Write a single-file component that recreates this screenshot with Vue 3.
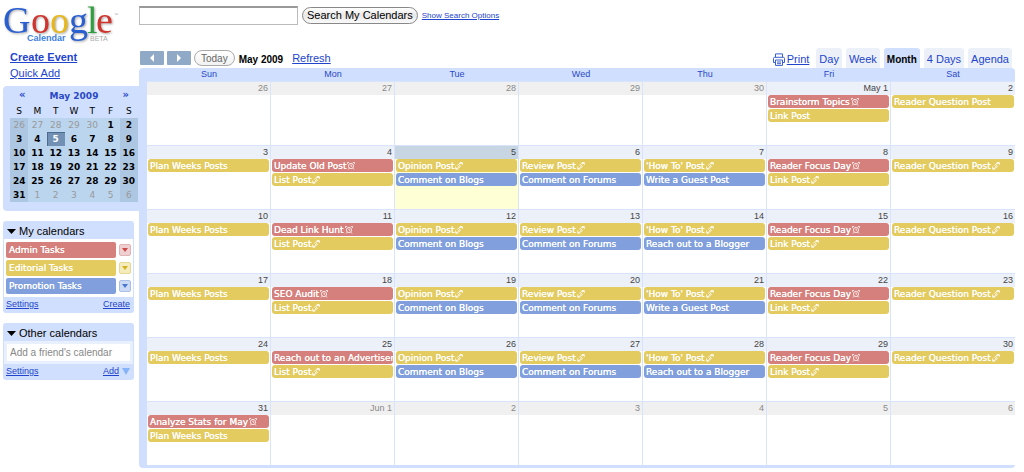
<script setup>
import { ref } from 'vue';

const search = ref('');
const friend = ref('');
const view = ref('Month');

const views = ['Day', 'Week', 'Month', '4 Days', 'Agenda'];
const weekdays = ['Sun', 'Mon', 'Tue', 'Wed', 'Thu', 'Fri', 'Sat'];

const calendars = [
    { name: 'Admin Tasks', color: 'red' },
    { name: 'Editorial Tasks', color: 'yellow' },
    { name: 'Promotion Tasks', color: 'blue' },
];

const red = (title, icon = 'alarm') => ({ title, icon, color: 'red' });
const yellow = (title, icon = 'repeat') => ({ title, icon, color: 'yellow' });
const blue = (title) => ({ title, icon: '', color: 'blue' });

function workWeek(mondayTask, thursdayTask) {
    return [
        [yellow('Plan Weeks Posts', '')],
        [mondayTask, yellow('List Post')],
        [yellow('Opinion Post'), blue('Comment on Blogs')],
        [yellow('Review Post'), blue('Comment on Forums')],
        [yellow("'How To' Post"), blue(thursdayTask)],
        [red('Reader Focus Day'), yellow('Link Post')],
        [yellow('Reader Question Post')],
    ];
}

const events = [
    [[], [], [], [], [], [red('Brainstorm Topics'), yellow('Link Post', '')], [yellow('Reader Question Post', '')]],
    workWeek(red('Update Old Post'), 'Write a Guest Post'),
    workWeek(red('Dead Link Hunt'), 'Reach out to a Blogger'),
    workWeek(red('SEO Audit'), 'Write a Guest Post'),
    workWeek(red('Reach out to an Advertiser'), 'Reach out to a Blogger'),
    [[red('Analyze Stats for May'), yellow('Plan Weeks Posts', '')], [], [], [], [], [], []],
];

// May 2009 starts on a Friday, April has 30 days
const weeks = events.map((week, w) => week.map((items, d) => {
    const n = w * 7 + d - 4;
    const day = n < 1 ? n + 30 : n > 31 ? n - 31 : n;
    let label = String(day);
    if (n === 1) label = 'May 1';
    if (n === 32) label = 'Jun 1';
    return { day, label, items, other: n < 1 || n > 31, today: n === 5 };
}));
</script>

<template>
    <div class="page">
        <aside class="sidebar">
            <svg class="logo" width="118" height="44" viewBox="0 0 118 44" role="img" aria-label="Google Calendar beta">
                <g class="google">
                    <text x="-1" y="33" fill="#2a5fd0">G</text>
                    <text x="27" y="33" fill="#d0342c">o</text>
                    <text x="46" y="33" fill="#e8b71a">o</text>
                    <text x="65" y="33" fill="#2a5fd0">g</text>
                    <text x="83" y="33" fill="#2f9e3f">l</text>
                    <text x="92" y="33" fill="#d0342c">e</text>
                </g>
                <text x="23" y="41" class="product">Calendar</text>
                <text x="86" y="41" class="beta">BETA</text>
                <text x="110" y="16" class="tm">™</text>
            </svg>
            <nav class="actions">
                <a href="#" class="create">Create Event</a>
                <a href="#">Quick Add</a>
            </nav>

            <section class="mini">
                <div class="mini-head">
                    <button type="button" aria-label="Previous month">«</button>
                    <span>May 2009</span>
                    <button type="button" aria-label="Next month">»</button>
                </div>
                <table>
                    <thead>
                        <tr><th v-for="d in weekdays" :key="d">{{ d[0] }}</th></tr>
                    </thead>
                    <tbody>
                        <tr v-for="(week, w) in weeks" :key="w">
                            <td v-for="cell in week" :key="cell.day" :class="{ other: cell.other, today: cell.today }">{{ cell.day }}</td>
                        </tr>
                    </tbody>
                </table>
            </section>

            <section class="panel">
                <h2><svg width="9" height="5" viewBox="0 0 9 5"><path d="M0 0h9L4.5 5z" /></svg>My calendars</h2>
                <ul>
                    <li v-for="c in calendars" :key="c.name">
                        <a href="#" class="name" :class="c.color">{{ c.name }}</a>
                        <button type="button" class="drop" :class="c.color" :aria-label="c.name + ' options'">
                            <svg width="6" height="4" viewBox="0 0 6 4"><path d="M0 0h6L3 4z" fill="currentColor" /></svg>
                        </button>
                    </li>
                </ul>
                <div class="panel-foot">
                    <a href="#">Settings</a>
                    <a href="#">Create</a>
                </div>
            </section>

            <section class="panel">
                <h2><svg width="9" height="5" viewBox="0 0 9 5"><path d="M0 0h9L4.5 5z" /></svg>Other calendars</h2>
                <div class="friend">
                    <input v-model="friend" type="text" aria-label="Add a friend's calendar" placeholder="Add a friend's calendar">
                </div>
                <div class="panel-foot">
                    <a href="#">Settings</a>
                    <span class="add">
                        <a href="#">Add</a>
                        <svg width="8" height="7" viewBox="0 0 8 7"><path d="M0 0h8L4 7z" fill="#86b4fa" /></svg>
                    </span>
                </div>
            </section>
        </aside>

        <main>
            <form class="search" @submit.prevent>
                <input v-model="search" type="text" aria-label="Search">
                <button type="submit">Search My Calendars</button>
                <a href="#">Show Search Options</a>
            </form>

            <div class="toolbar">
                <button type="button" class="arrow" aria-label="Previous">
                    <svg width="4" height="8" viewBox="0 0 4 8"><path d="M4 0v8L0 4z" fill="#fff" /></svg>
                </button>
                <button type="button" class="arrow" aria-label="Next">
                    <svg width="4" height="8" viewBox="0 0 4 8"><path d="M0 0v8l4-4z" fill="#fff" /></svg>
                </button>
                <button type="button" class="today-btn">Today</button>
                <strong>May 2009</strong>
                <a href="#" class="refresh">Refresh</a>
                <a href="#" class="print">
                    <svg width="12" height="13" viewBox="0 0 12 13" fill="none" stroke="#3a5fd0">
                        <path d="M2.5 4V.9h7V4M2.5 9.5h-2v-4q0-1.200 1.200-1.200h8.600q1.200 0 1.200 1.200v4h-2M2.500 7h7v5.400h-7zM4 9h4M4 10.700h4" />
                    </svg>
                    <span>Print</span>
                </a>
                <div class="tabs">
                    <button v-for="v in views" :key="v" type="button" :class="{ active: v === view }" @click="view = v">{{ v }}</button>
                </div>
            </div>

            <div class="month">
                <table>
                    <thead>
                        <tr><th v-for="d in weekdays" :key="d">{{ d }}</th></tr>
                    </thead>
                    <tbody>
                        <tr v-for="(week, w) in weeks" :key="w">
                            <td v-for="cell in week" :key="cell.day" :class="{ other: cell.other, today: cell.today }">
                                <div class="date">{{ cell.label }}</div>
                                <a v-for="e in cell.items" :key="e.title" href="#" class="event" :class="e.color">
                                    <span>{{ e.title }}</span>
                                    <svg v-if="e.icon === 'alarm'" width="8" height="8" viewBox="0 0 8 8" fill="none" stroke="#fff" stroke-width=".8">
                                        <circle cx="4" cy="4" r="2.600" />
                                        <path d="M4 2.600V4.200h1.200M.4 2V.5h1.700M7.600 2V.5H5.900M2 6.200L1 7.500M6 6.200l1 1.300" />
                                    </svg>
                                    <svg v-if="e.icon === 'repeat'" width="8" height="8" viewBox="0 0 8 8" fill="none" stroke="#fff" stroke-width=".9">
                                        <path d="M2.300 3.500Q3 1.400 6.800 1.400M4.800.5h2.500v2.300M5.700 3.800Q5 6.300 1.200 6.500M.7 4.500v2.700h2.400M3.200 4.800l1.700-1.700" />
                                    </svg>
                                </a>
                            </td>
                        </tr>
                    </tbody>
                </table>
            </div>
        </main>
    </div>
</template>

<style>
body {
    background: #fff;
}
</style>

<style scoped>
.page {
    display: grid;
    grid-template-columns: 139px 1fr;
    padding-right: 9px;
    font-family: "Liberation Sans", Arial, sans-serif;
    font-size: 11px;
    color: #000;
}

a {
    color: #2244cc;
}

button {
    padding: 0;
    border: 0;
    background: none;
    font-family: inherit;
    cursor: pointer;
}

svg {
    flex: none;
}

table {
    width: 100%;
    table-layout: fixed;
    border-collapse: separate;
    border-spacing: 0;
}

th,
td {
    padding: 0;
    font-weight: normal;
}

.sidebar {
    padding-left: 3px;
}

.logo {
    display: block;
    margin-left: 1px;
    overflow: visible;
}

.google {
    font-family: "Liberation Serif", "Times New Roman", serif;
    font-size: 38px;
    stroke-width: 1px;
    filter: drop-shadow(1px 1px 1px rgba(0, 0, 0, .35));
}

.product {
    font-size: 9px;
    font-weight: bold;
    fill: #3d7fe0;
}

.beta {
    font-size: 7px;
    fill: #aaa;
}

.tm {
    font-size: 4px;
    fill: #999;
}

.actions {
    display: flex;
    flex-direction: column;
    align-items: flex-start;
    gap: 2px;
    padding: 6px 7px;
    line-height: 14px;
}

.create {
    font-weight: bold;
}

.mini {
    padding: 4px 1px 9px 7px;
    border-radius: 4px 0 0 4px;
    background: #d0dffd;
    font-family: "DejaVu Sans", Verdana, sans-serif;
    font-size: 9px;
}

.mini-head {
    display: flex;
    justify-content: space-between;
    height: 14px;
    padding: 0 9px;
    line-height: 12px;
    font-weight: bold;
    color: #2a49c8;
}

.mini-head button {
    height: 10px;
    font-size: 10px;
    font-weight: bold;
    line-height: 10px;
    color: inherit;
}

.mini th,
.mini td {
    height: 14px;
    line-height: 14px;
    text-align: center;
}

.mini td {
    box-sizing: border-box;
    padding-top: 1px;
    background: #bbd5ee;
    font-weight: bold;
    line-height: 13px;
}

.mini td:first-child,
.mini td:last-child {
    background: #adc7e2;
}

.mini td.other {
    font-weight: normal;
    color: #999;
}

.mini td.today {
    background: #7290b4;
    box-shadow: inset 1px 1px #4d6a8f;
    color: #fff;
}

.panel {
    margin: 10px 5px 0 0;
    padding: 0 1px;
    border-radius: 3px;
    background: #d0dffd;
}

.panel h2 {
    display: flex;
    align-items: center;
    gap: 3px;
    box-sizing: border-box;
    height: 18px;
    margin: 0;
    padding: 2px 3px 0;
    font-size: 11px;
    font-weight: normal;
}

.panel ul {
    display: flex;
    flex-direction: column;
    gap: 2px;
    margin: 0;
    padding: 3px 2px;
    background: #fff;
    list-style: none;
}

.panel li {
    display: flex;
    align-items: center;
    gap: 3px;
}

.name {
    flex: 1;
    height: 16px;
    padding-left: 3px;
    border-radius: 2px;
    font-family: "DejaVu Sans", Verdana, sans-serif;
    font-size: 9px;
    line-height: 16px;
    color: #fff;
    text-decoration: none;
    text-shadow: 0 0 0 #fff;
}

.red {
    background: #d5807c;
}

.yellow {
    background: #e3cb60;
}

.blue {
    background: #819fdc;
}

.drop {
    display: flex;
    align-items: center;
    justify-content: center;
    width: 12px;
    height: 12px;
    border: 1px solid;
    border-radius: 2px;
}

.drop.red {
    border-color: #e2b4b6;
    background: #f0cfd1;
    color: #cc4b46;
}

.drop.yellow {
    border-color: #e6d88f;
    background: #f5ecbd;
    color: #d3b11f;
}

.drop.blue {
    border-color: #aabfe8;
    background: #cddaf5;
    color: #4a78d0;
}

.panel-foot {
    display: flex;
    justify-content: space-between;
    padding: 0 3px 1px 2px;
    font-size: 9px;
    line-height: 15px;
}

.add {
    display: flex;
    align-items: center;
    gap: 3px;
}

.friend {
    padding: 3px;
    background: #e8f0fe;
}

.friend input {
    display: block;
    box-sizing: border-box;
    width: 100%;
    height: 17px;
    padding: 0 3px;
    border: 0;
    background: #fff;
    font-family: inherit;
    font-size: 10px;
}

.friend input::placeholder {
    color: #888;
}

.search {
    display: flex;
    align-items: center;
    gap: 4px;
    height: 20px;
    padding: 5px 0 23px;
}

.search input {
    box-sizing: border-box;
    width: 159px;
    height: 19px;
    border: 1px solid #bbb;
    border-top: 2px solid #999;
    font-family: inherit;
    font-size: 11px;
}

.search button {
    height: 17px;
    padding: 0 4px;
    border: 1px solid #888;
    border-radius: 9px;
    background: linear-gradient(#fff, #e8e8e8 50%, #fafafa);
    font-size: 11px;
    color: #000;
}

.search a {
    font-size: 8px;
}

.toolbar {
    display: flex;
    align-items: center;
    height: 20px;
    padding-left: 1px;
}

.arrow {
    display: flex;
    align-items: center;
    justify-content: center;
    width: 24px;
    height: 14px;
    margin-right: 3px;
    border-radius: 1px;
    background: #8fa9c6;
}

.today-btn {
    height: 16px;
    padding: 0 6px;
    border: 1px solid #aaa;
    border-radius: 8px;
    background: linear-gradient(#fff, #f2f2f2);
    font-size: 10px;
    line-height: 13px;
    color: #666;
}

.toolbar strong {
    padding: 3px 9px 0 4px;
    font-size: 10px;
}

.print {
    display: flex;
    align-items: center;
    gap: 2px;
    margin-left: auto;
    padding-top: 2px;
    text-decoration: none;
}

.print span {
    text-decoration: underline;
}

.tabs {
    display: flex;
    gap: 4px;
    padding: 0 3px 0 7px;
}

.tabs button {
    height: 20px;
    padding: 2px 3px 0;
    border-radius: 3px 3px 0 0;
    background: #ecf1f9;
    font-size: 11px;
    color: #2244cc;
}

.tabs .active {
    background: #d0dffd;
    font-size: 10px;
    font-weight: bold;
    color: #000;
}

.month {
    padding: 0 0 3px 8px;
    border-radius: 4px;
    background: #d0dffd;
}

.month th {
    height: 13px;
    font-size: 9px;
    line-height: 13px;
    color: #2a49c8;
}

.month td {
    box-sizing: border-box;
    height: 64px;
    border-top: 1px solid #d8e4fb;
    border-right: 1px solid #d8e4fb;
    background: #fff;
    vertical-align: top;
}

.month td:last-child {
    border-right: 0;
}

.date {
    height: 13px;
    padding-right: 2px;
    background: #ebf0f9;
    font-size: 9px;
    line-height: 13px;
    text-align: right;
    color: #444;
}

.other .date {
    background: #f0f0f0;
    color: #888;
}

.month .today {
    background: #ffffd5;
}

.today .date {
    background: #c8d6e4;
}

.event {
    display: flex;
    align-items: center;
    gap: 1px;
    height: 13px;
    margin: 0 1px 1px;
    padding-left: 2px;
    border-radius: 3px;
    overflow: hidden;
    font-family: "DejaVu Sans", Verdana, sans-serif;
    font-size: 9px;
    line-height: 13px;
    white-space: nowrap;
    color: #fff;
    text-decoration: none;
    text-shadow: 0 0 0 #fff;
}

.event span {
    padding-top: 1px;
}
</style>
